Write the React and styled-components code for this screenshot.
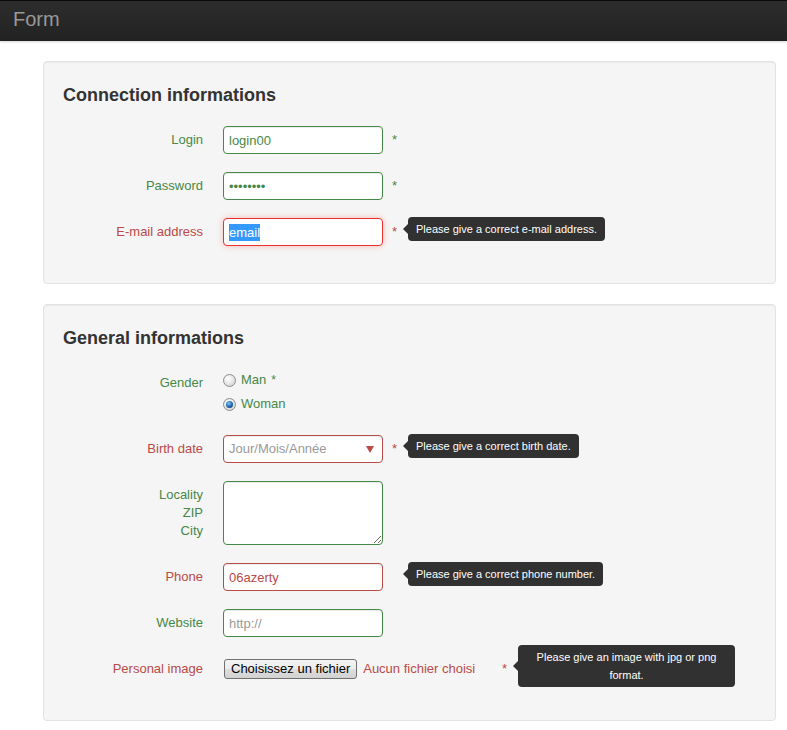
import React from "react";
import styled, { createGlobalStyle, css } from "styled-components";

const GREEN = "#468847";
const RED = "#b94a48";

const GlobalStyle = createGlobalStyle`
  html, body {
    margin: 0;
    padding: 0;
    background: #fff;
  }
  body {
    font-family: "Liberation Sans", Arial, sans-serif;
    font-size: 13px;
    line-height: 18px;
    color: #333;
  }
  * {
    box-sizing: border-box;
  }
`;

const Navbar = styled.div`
  height: 41px;
  border-top: 1px solid #0a0a0a;
  background: linear-gradient(to bottom, #2d2d2d, #222);
  box-shadow: 0 1px 2px rgba(0, 0, 0, 0.18);
`;

const Brand = styled.div`
  padding: 8px 13px;
  font-size: 20px;
  line-height: 20px;
  color: #999;
`;

const Page = styled.div`
  padding: 20px 11px 20px 43px;
`;

const Well = styled.section`
  background: #f5f5f5;
  border: 1px solid #e3e3e3;
  border-radius: 4px;
  box-shadow: inset 0 1px 1px rgba(0, 0, 0, 0.05);
  padding: 19px;
  margin-bottom: 20px;
`;

const Legend = styled.h2`
  margin: 4px 0 21px;
  font-size: 18px;
  line-height: 20px;
  font-weight: bold;
  color: #333;
`;

const Row = styled.div`
  display: grid;
  grid-template-columns: 140px 1fr;
  column-gap: 20px;
  margin-bottom: 18px;
`;

const Label = styled.label`
  text-align: right;
  padding-top: 5px;
  line-height: 18px;
  color: ${(p) => (p.$error ? RED : GREEN)};
`;

const Control = styled.div`
  display: flex;
  align-items: center;
  min-height: 28px;
`;

const fieldBase = css`
  width: 160px;
  height: 28px;
  padding: 4px 5px;
  border: 1px solid ${(p) => (p.$error ? RED : GREEN)};
  border-radius: 4px;
  background: #fff;
  box-shadow: inset 0 1px 1px rgba(0, 0, 0, 0.075);
  font-family: "Liberation Sans", Arial, sans-serif;
  font-size: 13px;
  line-height: 18px;
  color: ${(p) => (p.$error ? RED : GREEN)};
`;

const Input = styled.input`
  ${fieldBase}
  outline: none;
  &::placeholder {
    color: #999;
  }
`;

const FocusedField = styled.div`
  ${fieldBase}
  border-color: #e9322d;
  box-shadow: 0 0 6px #f8b9b7;
  display: flex;
  align-items: center;
`;

const Selected = styled.span`
  background: #3399ff;
  color: #fff;
  line-height: 17px;
`;

const SelectBox = styled.div`
  ${fieldBase}
  display: flex;
  align-items: center;
  justify-content: space-between;
  padding-right: 8px;
`;

const Placeholder = styled.span`
  color: #999;
`;

const Caret = styled.span`
  width: 0;
  height: 0;
  border-left: 4px solid transparent;
  border-right: 4px solid transparent;
  border-top: 7px solid ${RED};
`;

const TextArea = styled.textarea`
  ${fieldBase}
  height: 64px;
  resize: both;
  outline: none;
`;

const Req = styled.span`
  width: 11px;
  margin-left: 9px;
  color: ${(p) => (p.$error ? RED : GREEN)};
`;

const TipAnchor = styled.div`
  height: 0;
  display: flex;
  align-items: center;
`;

const Tooltip = styled.div`
  position: relative;
  margin-left: 5px;
  margin-bottom: 6px;
  padding: 3px 8px;
  border-radius: 4px;
  background: rgba(0, 0, 0, 0.8);
  color: #fff;
  font-size: 11px;
  line-height: 18px;
  white-space: ${(p) => (p.$wide ? "normal" : "nowrap")};
  width: ${(p) => (p.$wide ? "217px" : "auto")};
  text-align: center;

  &::before {
    content: "";
    position: absolute;
    left: -5px;
    top: 50%;
    margin-top: -5px;
    border-top: 5px solid transparent;
    border-bottom: 5px solid transparent;
    border-right: 5px solid rgba(0, 0, 0, 0.8);
  }
`;

const RadioGroup = styled.div`
  display: flex;
  flex-direction: column;
  gap: 2px;
  padding-bottom: 2px;
`;

const RadioLine = styled.div`
  display: flex;
  align-items: center;
  height: 22px;
  color: ${GREEN};
`;

const RadioDot = styled.span`
  width: 13px;
  height: 13px;
  border-radius: 50%;
  border: 1px solid #8c8e8e;
  background: radial-gradient(circle at 40% 35%, #fff 0%, #e4e4e4 55%, #c9c9c9 100%);
  display: inline-flex;
  align-items: center;
  justify-content: center;
  margin-right: 5px;

  ${(p) =>
    p.$checked &&
    css`
      &::after {
        content: "";
        width: 7px;
        height: 7px;
        border-radius: 50%;
        background: radial-gradient(circle at 40% 35%, #7cc8ff 0%, #1d63a6 55%, #0b2c4d 100%);
      }
    `}
`;

const RadioStar = styled.span`
  margin-left: 5px;
  font-size: 12px;
`;

const MultiLabel = styled(Label)`
  white-space: pre-line;
`;

const FileBox = styled.div`
  width: 270px;
  display: flex;
  align-items: center;
`;

const FileButton = styled.span`
  margin-left: 1px;
  height: 20px;
  padding: 0 6px;
  border: 1px solid #707070;
  border-radius: 3px;
  background: linear-gradient(to bottom, #f4f4f4 0%, #ececec 50%, #dedede 51%, #d2d2d2 100%);
  color: #000;
  line-height: 18px;
  white-space: nowrap;
`;

const FileText = styled.span`
  margin-left: 6px;
  color: ${RED};
  white-space: nowrap;
`;

const App = () => {
  return (
    <>
      <GlobalStyle />
      <Navbar>
        <Brand>Form</Brand>
      </Navbar>
      <Page>
        <Well>
          <Legend>Connection informations</Legend>
          <Row>
            <Label>Login</Label>
            <Control>
              <Input readOnly value="login00" />
              <Req>*</Req>
            </Control>
          </Row>
          <Row>
            <Label>Password</Label>
            <Control>
              <Input readOnly type="password" value="password" />
              <Req>*</Req>
            </Control>
          </Row>
          <Row>
            <Label $error>E-mail address</Label>
            <Control>
              <FocusedField $error>
                <Selected>email</Selected>
              </FocusedField>
              <Req $error>*</Req>
              <TipAnchor>
                <Tooltip>Please give a correct e-mail address.</Tooltip>
              </TipAnchor>
            </Control>
          </Row>
        </Well>

        <Well>
          <Legend>General informations</Legend>
          <Row>
            <Label>Gender</Label>
            <RadioGroup>
              <RadioLine>
                <RadioDot />
                Man
                <RadioStar>*</RadioStar>
              </RadioLine>
              <RadioLine>
                <RadioDot $checked />
                Woman
              </RadioLine>
            </RadioGroup>
          </Row>
          <Row>
            <Label $error>Birth date</Label>
            <Control>
              <SelectBox $error>
                <Placeholder>Jour/Mois/Année</Placeholder>
                <Caret />
              </SelectBox>
              <Req $error>*</Req>
              <TipAnchor>
                <Tooltip>Please give a correct birth date.</Tooltip>
              </TipAnchor>
            </Control>
          </Row>
          <Row>
            <MultiLabel>{"Locality\nZIP\nCity"}</MultiLabel>
            <Control>
              <TextArea readOnly />
            </Control>
          </Row>
          <Row>
            <Label $error>Phone</Label>
            <Control>
              <Input $error readOnly value="06azerty" />
              <Req />
              <TipAnchor>
                <Tooltip>Please give a correct phone number.</Tooltip>
              </TipAnchor>
            </Control>
          </Row>
          <Row>
            <Label>Website</Label>
            <Control>
              <Input readOnly placeholder="http://" />
            </Control>
          </Row>
          <Row>
            <Label $error>Personal image</Label>
            <Control>
              <FileBox>
                <FileButton>Choisissez un fichier</FileButton>
                <FileText>Aucun fichier choisi</FileText>
              </FileBox>
              <Req $error>*</Req>
              <TipAnchor>
                <Tooltip $wide>Please give an image with jpg or png format.</Tooltip>
              </TipAnchor>
            </Control>
          </Row>
        </Well>
      </Page>
    </>
  );
};

export default App;
